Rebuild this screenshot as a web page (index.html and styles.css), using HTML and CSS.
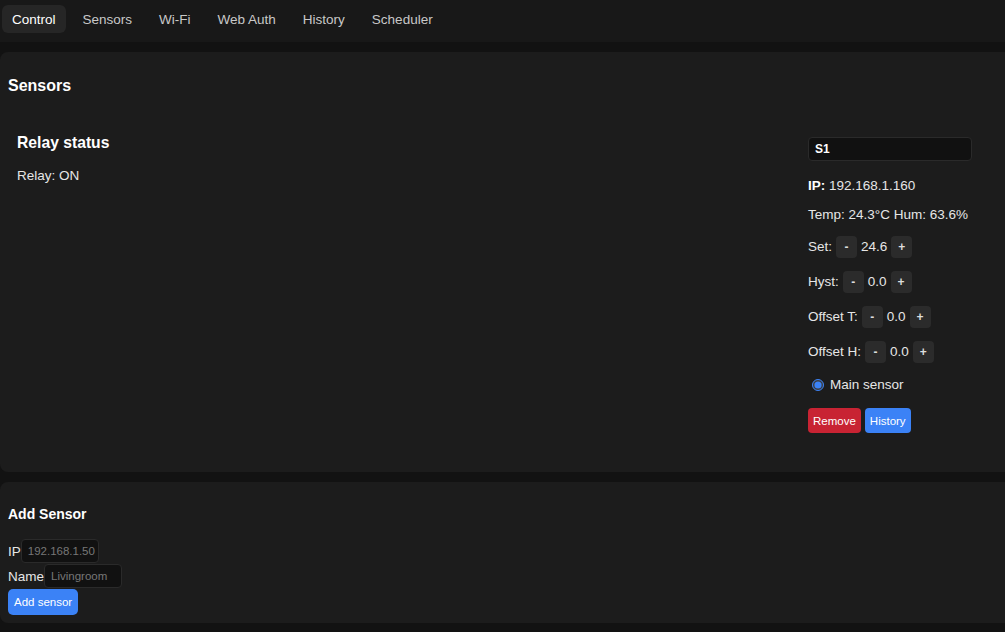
FILE: index.html
```html
<!DOCTYPE html>
<html lang="en">
<head>
    <meta charset="UTF-8">
    <meta name="viewport" content="width=device-width, initial-scale=1.0">
    <title>Thermostat</title>
    <link rel="stylesheet" href="styles.css">
</head>
<body>
    <nav class="tabs">
        <button class="tab active">Control</button>
        <button class="tab">Sensors</button>
        <button class="tab">Wi-Fi</button>
        <button class="tab">Web Auth</button>
        <button class="tab">History</button>
        <button class="tab">Scheduler</button>
    </nav>

    <section class="card">
        <h2>Sensors</h2>
        <div class="sensor-row">
            <div class="relay">
                <h3>Relay status</h3>
                <p>Relay: ON</p>
            </div>

            <div class="sensor">
                <input type="text" class="sensor-name" value="S1">
                <div class="line"><b>IP:</b> 192.168.1.160</div>
                <div class="line">Temp: 24.3°C Hum: 63.6%</div>
                <div class="line stepper">Set: <button class="step">-</button> <span>24.6</span> <button class="step">+</button></div>
                <div class="line stepper">Hyst: <button class="step">-</button> <span>0.0</span> <button class="step">+</button></div>
                <div class="line stepper">Offset T: <button class="step">-</button> <span>0.0</span> <button class="step">+</button></div>
                <div class="line stepper">Offset H: <button class="step">-</button> <span>0.0</span> <button class="step">+</button></div>
                <label class="line main"><input type="radio" name="main" checked> Main sensor</label>
                <div class="actions">
                    <button class="btn red">Remove</button>
                    <button class="btn blue">History</button>
                </div>
            </div>
        </div>
    </section>

    <section class="card add">
        <h3>Add Sensor</h3>
        <div class="field"><label for="ip">IP</label><input type="text" id="ip" placeholder="192.168.1.50"></div>
        <div class="field"><label for="name">Name</label><input type="text" id="name" placeholder="Livingroom"></div>
        <button class="btn blue big">Add sensor</button>
    </section>
</body>
</html>
```

FILE: styles.css
```css
/* General */
body {
    margin: 0;
    background: #121212;
    color: #e6e6e6;
    font-family: "Liberation Sans", Arial, sans-serif;
    font-size: 13.5px;
    overflow-x: hidden;
}

button {
    font-family: inherit;
    border: none;
    cursor: pointer;
}

/* Tabs */
.tabs {
    display: flex;
    gap: 7px;
    padding: 5px 2px 9px;
    background: #181818;
}

.tab {
    height: 28px;
    padding: 0 10px;
    background: transparent;
    color: #c8c8c8;
    font-size: 13.5px;
    border-radius: 6px;
}

.tab.active {
    background: #262626;
    color: #fff;
}

/* Cards */
.card {
    background: #1c1c1c;
    border-radius: 8px;
    padding: 8px;
    margin: 10px -8px 9px 0;
}

h2 {
    font-size: 16px;
    margin: 16px 0;
    line-height: 19px;
    color: #fff;
}

h3 {
    font-size: 15.7px;
    line-height: 19px;
    margin: 13px 0 16px;
    color: #fff;
}

.sensor-row {
    display: flex;
}

.relay {
    flex: 1;
    padding: 9px;
}

.relay p {
    margin: 0;
    line-height: 16px;
}

/* Sensor panel */
.sensor {
    width: 164px;
    margin-right: 33px;
    padding: 26px 0 31px;
    display: flex;
    flex-direction: column;
    gap: 13px;
}

.sensor-name {
    box-sizing: border-box;
    height: 24px;
    margin-bottom: 4px;
    padding: 0 6px;
    background: #111;
    border: 1px solid #2a2a2a;
    border-radius: 4px;
    color: #fff;
    font-family: inherit;
    font-size: 12px;
    font-weight: bold;
}

.line {
    line-height: 16px;
    white-space: nowrap;
}

.line b {
    color: #fff;
}

.stepper {
    display: flex;
    align-items: center;
    gap: 4px;
    height: 22px;
}

.step {
    height: 22px;
    width: 21px;
    padding: 0;
    background: #2b2b2b;
    color: #ddd;
    font-size: 12px;
    font-weight: bold;
    border-radius: 4px;
}

.main {
    display: flex;
    align-items: center;
    gap: 6px;
    margin-top: 1px;
}

.main input {
    margin: 0 0 0 4px;
    width: 12px;
    height: 12px;
    accent-color: #3b82f6;
    color-scheme: dark;
}

.actions {
    display: flex;
    gap: 4px;
    margin-top: 2px;
}

.btn {
    height: 25px;
    padding: 0 5px;
    font-size: 11.5px;
    color: #fff;
    border-radius: 4px;
}

.red {
    background: #c82333;
}

.blue {
    background: #3b82f6;
}

/* Add sensor form */
.add h3 {
    font-size: 14px;
    line-height: 16px;
    margin: 16px 0 17px;
}

.field {
    display: flex;
    align-items: center;
    height: 24px;
    margin-bottom: 1px;
}

.field input {
    box-sizing: border-box;
    width: 78px;
    height: 24px;
    padding: 0 2px 0 6px;
    background: #111;
    border: 1px solid #2a2a2a;
    border-radius: 4px;
    color: #fff;
    font-family: inherit;
    font-size: 11.5px;
}

.field input::placeholder {
    color: #777;
}

.btn.big {
    height: 26px;
    padding: 0 6px;
    border-radius: 5px;
}
```
